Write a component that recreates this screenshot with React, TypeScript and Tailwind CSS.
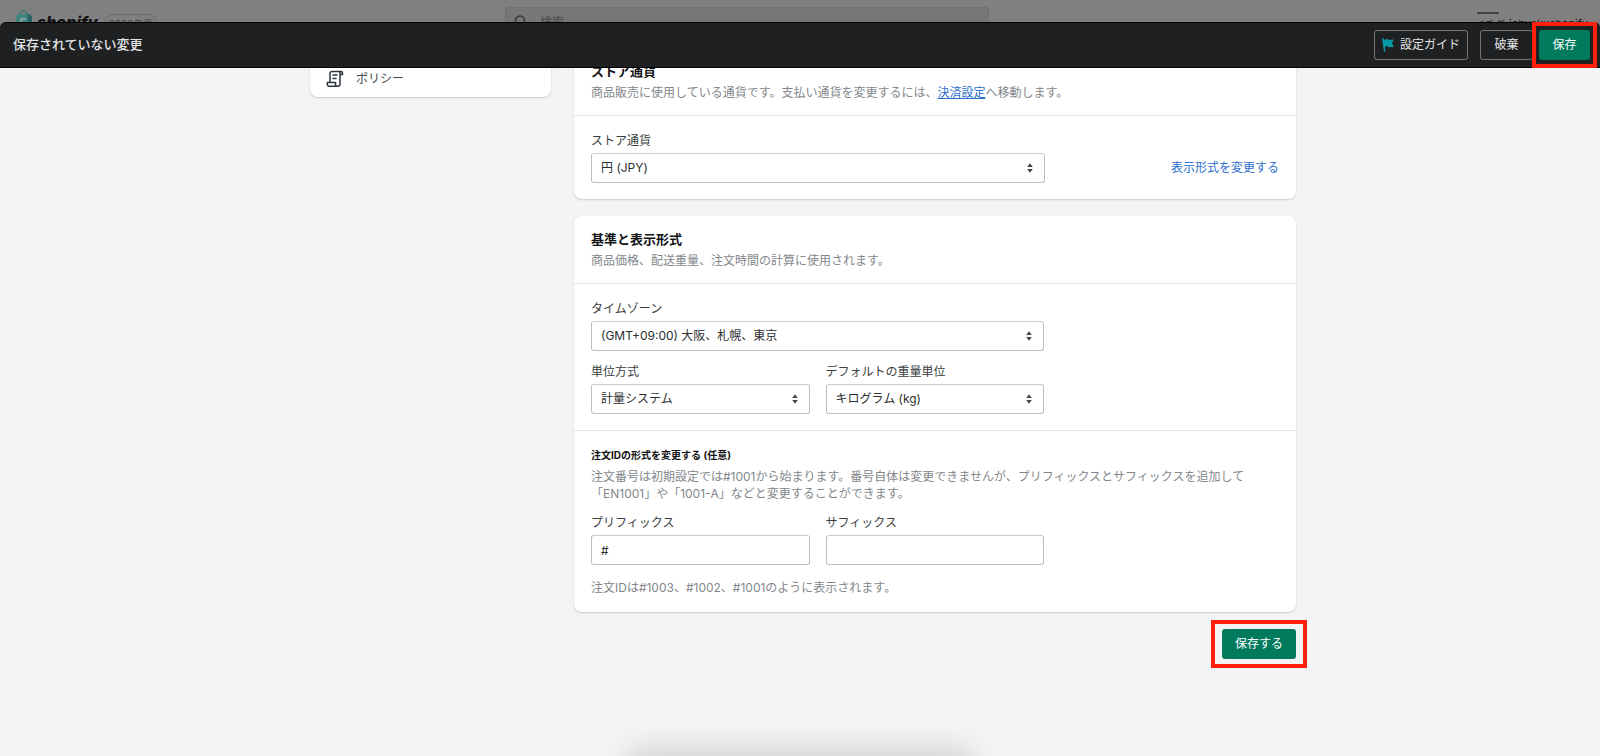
import React from "react";

const labelCls = "text-xs leading-[17px] text-[#3a3d40]";
const boxCls =
  "h-[30px] w-full rounded-[3px] border border-[#babfc3] border-t-[#c9cccf] bg-white px-[9px] text-xs text-[#2c2e30]";
const descCls = "text-xs leading-[17px] text-[#83878b]";

function SelectField({ id, label, value }: { id: string; label: string; value: string }) {
  return (
    <div className="flex min-w-0 flex-1 flex-col gap-1">
      <label htmlFor={id} className={labelCls}>{label}</label>
      <div className="relative">
        <select id={id} defaultValue={value} className={`${boxCls} appearance-none`}>
          <option>{value}</option>
        </select>
        <svg className="pointer-events-none absolute top-2.5 right-3 h-2.5 w-1.5" viewBox="0 0 6 10" fill="#42474c" aria-hidden="true">
          <path d="M3 .3 5.8 4H.2zM3 9.700.2 6h5.600z" />
        </svg>
      </div>
    </div>
  );
}

function TextField({ id, label, value }: { id: string; label: string; value: string }) {
  return (
    <div className="flex min-w-0 flex-1 flex-col gap-1">
      <label htmlFor={id} className={labelCls}>{label}</label>
      <input id={id} type="text" defaultValue={value} className={boxCls} />
    </div>
  );
}

function CardHeader({ title, children }: { title: string; children: React.ReactNode }) {
  return (
    <header className="border-b border-[#e1e3e5] px-[17px] py-3.5">
      <h2 className="text-[13px] leading-[18px] font-bold text-[#111213]">{title}</h2>
      <p className={`mt-1 ${descCls}`}>{children}</p>
    </header>
  );
}

const cardCls = "rounded-lg bg-white shadow-[0_1px_2px_rgba(0,0,0,0.18)]";

export default function App() {
  return (
    <div className="flex min-h-screen flex-col overflow-hidden bg-[#f4f4f4] font-['Inter','Noto_Sans_CJK_JP',sans-serif]">
      <div className="bg-[#808080]">
        <div className="flex h-[22px] items-start justify-between overflow-hidden pr-3 pl-3.5">
          <div className="flex w-[491px] shrink-0 items-start">
            <svg className="mt-2.5 h-[21px] w-[19px] shrink-0" viewBox="0 0 19 21" aria-hidden="true">
              <path d="M2.5 5 14 3.6 18 6v13l-6 2L1 19z" fill="#3f8580" />
              <path d="M14 3.6 18 6v13l-5 2z" fill="#2a6468" />
              <path d="M5.5 7C5.5 2.5 7.5 .7 9.5 .7S12.500 3 12.700 6" fill="none" stroke="#3b7a75" strokeWidth="1.2" />
              <path d="M11.5 9.2C8 7.5 6 9.5 7 11.5s4 2 3.5 4.5-3 2-5 .8" fill="none" stroke="#8fa9a8" strokeWidth="1.8" />
            </svg>
            <span className="mt-2.5 ml-1 text-base leading-6 font-extrabold text-[#111] italic">shopify</span>
            <span className="mt-3.5 ml-1.5 rounded-full border border-[#6c6c6c] px-1 text-[10px] leading-[18px] text-[#414141]">2022年夏</span>
          </div>
          <div className="mt-[7px] flex h-[30px] w-[484px] items-start gap-3 rounded-[3px] border border-[#6f7171] bg-[#757876] px-2 pt-[7px] text-xs leading-4 text-[#48494b]">
            <svg className="h-3.5 w-3.5" viewBox="0 0 14 14" fill="none" stroke="#333638" strokeWidth="1.5" aria-hidden="true">
              <circle cx="6" cy="5.5" r="4.5" />
              <path d="m9.5 9 4 4" />
            </svg>
            <span>検索</span>
          </div>
          <div className="flex flex-1 items-start justify-end pt-3 text-[11px] leading-5 text-[#161718]">
            <span className="mr-1.5 flex flex-col items-center text-[10px] italic">
              <span className="h-0.5 w-[22px] bg-[#444]" />
              <span>イチダ</span>
            </span>
            <span className="mt-0.5">johyakushopify</span>
          </div>
        </div>
        <div className="flex h-[46px] items-center justify-between rounded-t-md border-y border-black bg-[#1f2022] pr-2.5 pl-[13px]">
          <h1 className="text-[13px] font-medium text-[#e3e5e7]">保存されていない変更</h1>
          <div className="flex items-center">
            <button type="button" className="mr-3 flex h-[30px] items-center gap-1.5 rounded-[3px] border border-[#73777b] px-[7px] text-xs text-[#e3e5e7]">
              <svg className="h-3.5 w-3" viewBox="0 0 12 14" fill="#079aa6" aria-hidden="true">
                <path d="M0 .8 1.5 .3 2 1.8 6 1l.7 1L11.8 1.5 10 5l1.8 4-5.300 .3-.6-1.100-3 .3 .5 5H2z" />
              </svg>
              設定ガイド
            </button>
            <button type="button" className="mr-1.5 h-[30px] w-[53px] rounded-[3px] border border-[#73777b] text-xs text-[#e3e5e7]">破棄</button>
            <div className="relative">
              <button type="button" className="h-[30px] w-[51px] rounded-[3px] bg-[#007a5c] text-xs text-white">保存</button>
              <span className="pointer-events-none absolute -inset-x-[7px] -inset-y-2 border-4 border-[#ff1f0f]" />
            </div>
          </div>
        </div>
      </div>

      <div className="relative flex-1 overflow-hidden pl-1.5">
        <div className="mx-auto -mt-5 flex w-full max-w-[986px] items-start gap-[23px]">
          <nav className={`w-[241px] shrink-0 px-4 pt-[21px] pb-[9px] ${cardCls}`}>
            <a href="#policy" className="flex items-center gap-3 text-xs leading-[19px] text-[#42474c]">
              <svg className="h-[18px] w-[18px]" viewBox="0 0 18 18" fill="none" stroke="#2e3440" strokeWidth="1.5" strokeLinejoin="round" strokeLinecap="round" aria-hidden="true">
                <path d="M4 12.500V3.500a2 2 0 0 1 2-2h9M15 1.500a1.500 1.500 0 0 1 1.500 1.500v1.500h-2.500V3a1.500 1.500 0 0 1 1-1.500zM14 4.500V14a2 2 0 0 1-2 2.200H3A1.700 1.700 0 0 1 1.300 14.500v-2h8.200v2A1.700 1.700 0 0 0 11.500 16.200M7 5h4M7 8.500h3" />
              </svg>
              ポリシー
            </a>
          </nav>

          <main className="min-w-0 flex-1">
            <section className={cardCls}>
              <CardHeader title="ストア通貨">
                商品販売に使用している通貨です。支払い通貨を変更するには、
                <a href="#payments" className="text-[#2c6ecb] underline">決済設定</a>
                へ移動します。
              </CardHeader>
              <div className="flex items-end justify-between px-[17px] py-4">
                <div className="flex w-[454px]">
                  <SelectField id="currency" label="ストア通貨" value="円 (JPY)" />
                </div>
                <a href="#format" className="text-xs leading-[30px] text-[#2c6ecb]">表示形式を変更する</a>
              </div>
            </section>

            <section className={`mt-[17px] ${cardCls}`}>
              <CardHeader title="基準と表示形式">商品価格、配送重量、注文時間の計算に使用されます。</CardHeader>
              <div className="border-b border-[#e1e3e5] px-[17px] py-4">
                <div className="flex max-w-[453px] flex-col gap-3">
                  <SelectField id="timezone" label="タイムゾーン" value="(GMT+09:00) 大阪、札幌、東京" />
                  <div className="flex gap-4">
                    <SelectField id="unit" label="単位方式" value="計量システム" />
                    <SelectField id="weight" label="デフォルトの重量単位" value="キログラム (kg)" />
                  </div>
                </div>
              </div>
              <div className="px-[17px] py-4">
                <h3 className="text-[10px] leading-[17px] font-bold text-[#111213]">注文IDの形式を変更する (任意)</h3>
                <p className={`mt-1 ${descCls}`}>
                  注文番号は初期設定では#1001から始まります。番号自体は変更できませんが、プリフィックスとサフィックスを追加して
                  <br />
                  「EN1001」や「1001-A」などと変更することができます。
                </p>
                <div className="mt-3 flex max-w-[453px] gap-4">
                  <TextField id="prefix" label="プリフィックス" value="#" />
                  <TextField id="suffix" label="サフィックス" value="" />
                </div>
                <p className={`mt-3.5 ${descCls}`}>注文IDは#1003、#1002、#1001のように表示されます。</p>
              </div>
            </section>

            <div className="mt-[17px] flex justify-end">
              <div className="relative">
                <button type="button" className="block h-[30px] w-[74px] rounded-[3px] bg-[#007a5c] text-xs text-white">保存する</button>
                <span className="pointer-events-none absolute -inset-x-[11px] -inset-y-[9px] border-4 border-[#ff1f0f]" />
              </div>
            </div>
          </main>
        </div>
        <div className="pointer-events-none absolute top-full left-1/2 h-10 w-[330px] -translate-x-1/2 shadow-[0_0_30px_6px_rgba(0,0,0,0.15)]" />
      </div>
    </div>
  );
}
